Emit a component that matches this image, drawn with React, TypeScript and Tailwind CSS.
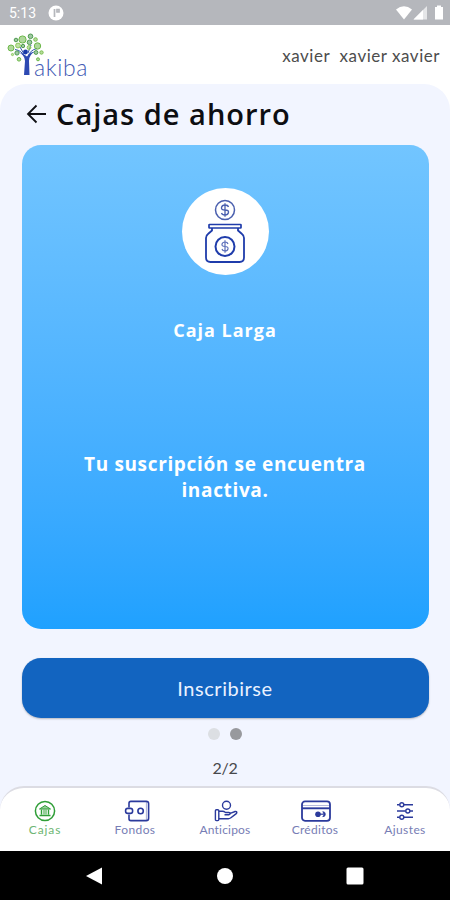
// App.tsx
import type { ReactNode } from "react";

type Tab = { label: string; active?: boolean; text: string; icon: ReactNode };

const tabs: Tab[] = [
  {
    label: "Cajas",
    active: true,
    text: "tracking-[0.9px]",
    icon: (
      <svg width="22" height="22" viewBox="0 0 22 22" fill="none" stroke="currentColor">
        <circle cx="11" cy="11" r="9.6" strokeWidth="1.5" />
        <path d="M5.5 9 11 5.5 16.5 9z" fill="currentColor" fillOpacity=".5" strokeWidth="1" />
        <path d="M7.5 9.5v5M14.5 9.5v5M5.5 15.5h11" strokeWidth="1.4" />
        <path d="M10 9.5v5M12 9.5v5" strokeWidth="1" />
      </svg>
    ),
  },
  {
    label: "Fondos",
    text: "tracking-[0.4px]",
    icon: (
      <svg className="ml-[3px]" width="26" height="22" viewBox="0 0 26 22" fill="none" stroke="currentColor" strokeWidth="1.6">
        <path d="M5 7.5V3.2Q5 1.4 6.8 1.4h15.4Q24.6 1.4 24.6 3.6v14.6q0 2.4-2.4 2.4H6.8Q5 20.6 5 18.8V14.5" />
        <path d="M22.4 2v18" strokeWidth=".8" strokeOpacity=".5" />
        <rect x="1.6" y="8.4" width="7" height="5" rx="2.2" />
        <circle cx="16.6" cy="11" r="2.7" />
      </svg>
    ),
  },
  {
    label: "Anticipos",
    text: "tracking-[0.2px]",
    icon: (
      <svg className="ml-[2px]" width="24" height="22" viewBox="0 0 24 22" fill="none" stroke="currentColor" strokeWidth="1.4" strokeLinejoin="round">
        <circle cx="12.5" cy="5.2" r="4" />
        <rect x="1.4" y="9.8" width="3.4" height="10.8" rx="1" />
        <path d="M4.8 11.3h3.7q1.5 0 3 1.2h3.4q1.3 0 1.3 1.1t-1.3 1.1H10.5M16.2 13.3l4.9-1.8q1.7-.2 1.7 1.1-.1.9-1.2 1.5l-4.7 3.7q-1.3 1-2.7 1H4.8" />
      </svg>
    ),
  },
  {
    label: "Créditos",
    text: "tracking-[0.3px]",
    icon: (
      <svg className="ml-[2px]" width="30" height="22" viewBox="0 0 30 22" fill="none" stroke="currentColor">
        <rect x="1" y="1.4" width="28" height="19.4" rx="3" strokeWidth="1.8" />
        <path d="M1 5.5h28" strokeWidth="1" strokeOpacity=".35" />
        <path d="M1 8.3h28" strokeWidth="1.9" />
        <circle cx="17" cy="14.2" r="2.8" fill="currentColor" stroke="none" />
        <path d="M19 14.2h3.5" strokeWidth="1.2" />
        <path d="M21.8 11.7q2.5 0 2.5 2.5t-2.5 2.5q1-1.2 1-2.5t-1-2.5z" fill="currentColor" strokeWidth=".8" />
      </svg>
    ),
  },
  {
    label: "Ajustes",
    text: "tracking-[0.4px]",
    icon: (
      <svg width="20" height="22" viewBox="0 0 20 22" fill="none" stroke="currentColor" strokeWidth="1.4">
        <path d="M2 4.8h2.6M9 4.8h9M2 11h8.6M15 11h3M2 17.2h2.6M9 17.2h9" />
        <circle cx="6.8" cy="4.8" r="2" />
        <circle cx="12.8" cy="11" r="2" />
        <circle cx="6.8" cy="17.2" r="2" />
      </svg>
    ),
  },
];

// leaves of the logo: x, y, radius, colour
const leaves: [number, number, number, string][] = [
  [15.5, 6.5, 3.6, "#6db84a"],
  [23.5, 3.3, 2.3, "#4f9a52"],
  [9, 7, 1.8, "#4f9a52"],
  [4, 15, 3, "#6db84a"],
  [11, 12.5, 2.4, "#8bc95b"],
  [30.5, 13, 3.2, "#6db84a"],
  [28.5, 6.5, 1.8, "#7bbf4f"],
  [22.5, 9.3, 2.3, "#4f9a52"],
  [22, 14.5, 1.9, "#8bc95b"],
  [16, 13, 1.7, "#4f9a52"],
  [29, 19.5, 1.9, "#4f9a52"],
  [34.5, 19.5, 1.7, "#7bbf4f"],
  [10, 20, 2.1, "#4f9a52"],
  [5.5, 21.5, 1.1, "#8bc95b"],
  [12, 26.3, 1.8, "#6db84a"],
  [31, 26.3, 1.5, "#6db84a"],
];

const Logo = () => (
  <div className="relative w-20 h-11">
    <svg className="absolute left-0 top-0" width="38" height="44" viewBox="0 0 38 44">
      <path d="M8 16.5q7 1 9 7M30 15.5q-7 1.5-9 8M13 14l4 7M24 12l-3 8" fill="none" stroke="#3156ae" strokeWidth="1" />
      <path d="M11 19q6.5 2.5 7 9L17 42h5.5l-.5-14q0-6.500 6-9.500-5 .5-8 5-3.500-3.500-9-4.500z" fill="#2d49b2" />
      {leaves.map(([x, y, r, color]) => (
        <circle key={`${x}-${y}`} cx={x} cy={y} r={r} fill={color} fillOpacity=".55" stroke={color} strokeWidth="1" />
      ))}
      <circle cx="18.5" cy="19" r="2.4" fill="#1738a8" />
    </svg>
    <span className="absolute left-[27px] top-[20px] text-[23px] leading-7 font-light tracking-[0.6px] text-[#4159b4]">
      akiba
    </span>
  </div>
);

const JarIcon = () => (
  <svg width="42" height="66" viewBox="0 0 42 66" fill="none" stroke="#1f3cab">
    <g stroke="#4a5fae">
      <circle cx="21" cy="11" r="9.5" strokeWidth="1.5" />
      <path d="M24.5 8q-.5-2-3.500-2t-3.500 2.500 3.500 2.500 3.500 2.500-3.500 2.500-3.500-2M21 4.200v13.600" strokeWidth="1.3" />
    </g>
    <rect x="5" y="25.5" width="32" height="3.5" rx=".5" strokeWidth="1.7" />
    <path
      d="M8 29v2.5L4 35q-2 1.5-2 4v19.5Q2 63 6.500 63h29q4.500 0 4.500-4.500V39q0-2.500-2-4l-4-3.500V29"
      strokeWidth="1.8"
    />
    <circle cx="21" cy="47.5" r="9.5" strokeWidth="2" />
    <path
      d="M24 45q-.5-2-3-2t-3 2.200 3 2.300 3 2.300-3 2.200-3-2M21 41.200v12.600"
      stroke="#5d70ba"
      strokeWidth="1.2"
    />
  </svg>
);

const StatusBar = () => (
  <div className="h-[25px] shrink-0 bg-[#b5b7bc] flex items-center justify-between pl-[9px] pr-[6px] text-white">
    <div className="flex items-center gap-3">
      <span className="font-['Roboto',sans-serif] text-sm leading-none">5:13</span>
      <svg width="16" height="16" viewBox="0 0 16 16">
        <circle cx="8" cy="8" r="7.5" fill="#fff" />
        <path d="M6.5 4v8M9 4.5h2v2.5H9z" stroke="#b5b7bc" strokeWidth="1.7" fill="none" />
      </svg>
    </div>
    <svg width="48" height="16" viewBox="0 0 48 16" fill="#fff">
      <path d="M0 4.5Q8-2 16 4.5L8 14.5z" />
      <path d="M31 1v13.5H17.5z" fillOpacity=".65" />
      <path d="M27 5v9.5h-9.5z" />
      <path d="M39 2h2V.5h4V2h2v12.5h-8z" />
    </svg>
  </div>
);

export default function App() {
  return (
    <div className="w-[450px] h-[900px] flex flex-col overflow-hidden bg-white font-['Lato','Open_Sans',sans-serif]">
      <StatusBar />

      <header className="h-[59px] shrink-0 flex items-center justify-between pl-[7px] pr-[10px] bg-white">
        <Logo />
        <span className="mt-[2px] text-[17px] tracking-[0.53px] whitespace-pre text-[#4d4d4d]">
          xavier  xavier xavier
        </span>
      </header>

      <main className="flex-1 flex flex-col items-center rounded-t-[26px] bg-[#f2f5ff] px-[22px]">
        <div className="w-full h-[61px] shrink-0 flex items-center gap-[9px] pl-1">
          <svg className="-mt-[2px]" width="21" height="20" viewBox="0 0 21 20" fill="none" stroke="#101014" strokeWidth="1.8">
            <path d="M20 10H2M10.5 1.5 2 10l8.5 8.5" />
          </svg>
          <h1 className="-mt-[2px] font-['Open_Sans',sans-serif] text-[29px] leading-9 font-semibold tracking-[1px] text-[#0d0e12]">
            Cajas de ahorro
          </h1>
        </div>

        {/* Tarjeta */}
        <section className="w-[407px] h-[484px] shrink-0 rounded-[19px] bg-linear-to-b from-[#72c5ff] to-[#1fa1ff] flex flex-col items-center pt-[43px] font-['Open_Sans',sans-serif] text-white text-center">
          <div className="size-[87px] shrink-0 rounded-full bg-white flex items-center justify-center">
            <JarIcon />
          </div>
          <h2 className="mt-[42px] text-[18px] leading-[26px] font-bold tracking-[1px]">Caja Larga</h2>
          <p className="mt-[108px] w-[320px] text-[19px] leading-[26px] font-bold tracking-[0.65px]">
            Tu suscripción se encuentra inactiva.
          </p>
        </section>

        <button className="mt-[29px] w-[407px] h-[60px] shrink-0 rounded-[19px] bg-[#1264c0] text-[#eaf2ff] text-[20px] tracking-[0.55px] shadow-[0_1px_2px_rgba(0,0,0,0.25)]">
          Inscribirse
        </button>

        {/* Paginación */}
        <div className="mt-[10px] flex gap-[10px]">
          <span className="size-3 rounded-full bg-[#dcdfe3]" />
          <span className="size-3 rounded-full bg-[#98999d]" />
        </div>
        <span className="mt-4 text-[16px] leading-6 tracking-[-0.3px] text-[#47484c]">2/2</span>
      </main>

      <div className="h-[65px] shrink-0 bg-[#f2f5ff]">
        <nav className="h-full grid grid-cols-5 rounded-t-[24px] border-t-2 border-[#dcdce3] bg-white pt-[12px]">
          {tabs.map((t) => (
            <div
              key={t.label}
              className={`flex flex-col items-center ${t.active ? "text-[#2f9e37]" : "text-[#2b3a9c]"}`}
            >
              {t.icon}
              <span
                className={`text-[12px] leading-4 ${t.text} ${t.active ? "text-[#6db573]" : "text-[#777db5]"}`}
              >
                {t.label}
              </span>
            </div>
          ))}
        </nav>
      </div>

      {/* Botones de Android */}
      <div className="h-[49px] shrink-0 bg-black grid grid-cols-[187px_76px_184px] items-center text-white">
        <svg className="justify-self-center" width="18" height="18" viewBox="0 0 18 18" fill="currentColor">
          <path d="M17 .5v17L1 9z" />
        </svg>
        <svg className="justify-self-center" width="18" height="18" viewBox="0 0 18 18" fill="currentColor">
          <circle cx="9" cy="9" r="8" />
        </svg>
        <svg className="justify-self-center" width="18" height="18" viewBox="0 0 18 18" fill="currentColor">
          <rect x=".5" y=".5" width="17" height="17" rx="1.5" />
        </svg>
      </div>
    </div>
  );
}
